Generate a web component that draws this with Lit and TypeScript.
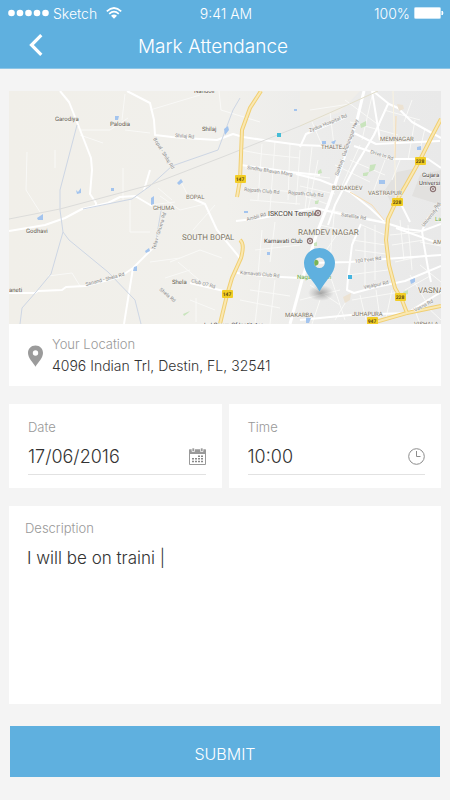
import { LitElement, html, css, svg } from "lit";
import { customElement, state } from "lit/decorators.js";

type Label = [text: string, x: number, y: number, size: number, kind: string, angle?: number];

const labels: Label[] = [
  ["Garodiya", 55, 121, 6, "town"],
  ["Palodia", 110, 126, 6, "town"],
  ["Nandoli", 194, 93, 6, "town"],
  ["Shilaj", 202, 131, 6, "town"],
  ["Godhavi", 26, 233, 6, "town"],
  ["aneti", 9, 292, 6, "town"],
  ["Shela", 172, 284, 6, "town"],
  ["BOPAL", 186, 199, 6, "area"],
  ["GHUMA", 153, 210, 6, "area"],
  ["THALTEJ", 321, 149, 6, "area"],
  ["MEMNAGAR", 380, 141, 6, "area"],
  ["BODAKDEV", 332, 190, 6, "area"],
  ["VASTRAPUR", 368, 195, 6, "area"],
  ["AM", 433, 244, 6, "area"],
  ["MAKARBA", 285, 317, 6, "area"],
  ["JUHAPURA", 352, 316, 6, "area"],
  ["VISHALA", 414, 326, 6, "area"],
  ["SOUTH BOPAL", 182, 240, 8, "area"],
  ["RAMDEV NAGAR", 298, 235, 8, "area"],
  ["VASNA", 418, 293, 8, "area"],
  ["ISKCON Temple", 268, 216, 7, "place"],
  ["Karnavati Club", 264, 243, 6, "place"],
  ["Gujara", 422, 177, 6, "place"],
  ["Universi", 419, 185, 6, "place"],
  ["L J Group Of Institutes", 204, 327, 6, "place"],
  ["Nagar Udyan", 297, 279, 6, "park"],
  ["La", 435, 221, 6, "park"],
  ["Shilaj Rd", 175, 137, 5, "street", 4],
  ["Bopal - Shilaj Rd", 153, 139, 5, "street", 58],
  ["Sindhu Bhavan Marg", 247, 169, 5, "street", 9],
  ["Rajpath Club Rd", 244, 191, 5, "street", 5],
  ["Rajpath Club Rd", 288, 194, 5, "street", 5],
  ["Zydus Hospital Rd", 310, 132, 5, "street", -22],
  ["Sarkhej - Gandhinagar Hwy", 338, 176, 5, "street", -70],
  ["Drive In Rd", 370, 153, 5, "street", 18],
  ["Ambli Rd", 247, 221, 5, "street", -15],
  ["Satellite Rd", 341, 216, 5, "street", 9],
  ["100 Feet Rd", 355, 263, 5, "street", -7],
  ["Vejalpur Rd", 364, 289, 5, "street", -12],
  ["Vasna Rd", 415, 312, 5, "street", -28],
  ["Karnavati Club Rd", 240, 274, 5, "street", 5],
  ["Club O7 Rd", 191, 282, 5, "street", 15],
  ["Shela Rd", 159, 290, 5, "street", 40],
  ["Telav - Ghuma Rd", 155, 250, 5, "street", -73],
  ["Sanand - Shela Rd", 86, 286, 5, "street", -15],
  ["University Rd", 424, 227, 5, "street", -52],
  ["Rd", 436, 209, 5, "street", -45],
];

const shields: [string, number, number][] = [
  ["147", 240, 179],
  ["147", 227, 294],
  ["228", 420, 161],
  ["228", 397, 202],
  ["228", 400, 297],
  ["947", 372, 321],
];

const mapArt = svg`
  <defs>
    <linearGradient id="land" x1="0" x2="1" y1="0" y2="0">
      <stop offset="0" stop-color="#f1efe9" />
      <stop offset="0.5" stop-color="#f1f0ec" />
      <stop offset="0.72" stop-color="#ececeb" />
      <stop offset="1" stop-color="#e9e9e9" />
    </linearGradient>
    <radialGradient id="shade">
      <stop offset="0" stop-color="#555" stop-opacity="0.5" />
      <stop offset="1" stop-color="#777" stop-opacity="0" />
    </radialGradient>
  </defs>
  <rect x="9" y="91" width="432" height="233" fill="url(#land)" />
  <path d="M397 172L417 168L402 195L392 205L385 190Z M420 175L441 170V205L412 196Z" fill="#e2e1df" />
  <path d="M300 91H360L340 112L300 126Z" fill="#f0eee9" />
  <g fill="none" stroke="#f9f9f7" stroke-width="1">
    <path d="M27 152L26 190L40 212M80 130H110L128 118M80 135L103 143M125 94L122 120M125 130L150 133M123 168V200M55 150V168M150 110L200 95M219 91L221 110L260 122M193 230L215 205M160 196L180 210L205 204M158 188L172 200M180 180L190 200M150 205L175 202M170 262L200 250L222 258M165 278L190 270M190 300L215 310M178 262L205 285M48 276L72 273L80 286M130 200V232H150M150 262L180 258M196 298V322M240 150L262 154L300 158M262 144L258 200M275 142L270 210M290 144L288 200M300 150L296 205M312 147L305 210M245 168L330 178M243 188L325 194M250 200L300 204M310 110L350 104M312 122L322 145M330 112L334 146M345 100L380 126M350 122L398 135M372 96L362 140M384 110L420 120M412 100L404 122M350 160L385 175M335 165L370 182M360 145L340 190M378 126L360 160M385 160L372 195M400 160L392 180M415 120L408 160M425 128L420 150M300 186L335 194M305 196L330 205M318 160L308 210M330 210L385 222M320 225L350 232M335 205L330 260M362 225L385 235M352 240L386 245M355 250L386 254M365 228V285M375 225V280M348 275L388 270M352 300L400 292M360 295L366 320M376 290L380 318M392 290L386 318M310 285L340 305M320 300L312 324M330 275L345 320M300 300L340 290M335 320L350 295M390 235L420 232M392 245L424 240M395 262L427 255M408 225L412 270M400 220L404 260M420 242L441 246M420 265L441 282M410 275L425 300M405 290L430 276M425 305L441 320M415 310L420 324M340 230L325 252M255 250L300 245M262 230L258 275M275 222L270 262M250 290L290 296M260 280L255 324M275 280L270 324M240 300L280 308" />
  </g>
  <g fill="none" stroke="#fff" stroke-linejoin="round" stroke-width="2">
    <path d="M60 91L69 102L77 122L91 158L92 170L90 194L96 203V206" />
    <path d="M9 231L45 225L65 218L82 209L108 203L120 197L135 196L152 206" />
    <path d="M127 91L150 103L154 120L155 135L172 137L200 139L217 140L233 134L243 137L270 141L300 145L325 146" />
    <path d="M9 293L35 293L38 291L62 290L66 287L85 286L120 277L133 268L155 246M133 268L124 324" />
    <path d="M187 196L205 204L217 230L240 258M150 170L144 190" />
    <path d="M364 91L357 120L344 158L328 205L318 230L302 280L290 324" stroke-width="3" />
    <path d="M373 91L389 104L398 108L412 122L441 138M388 104L374 135L354 168L335 205L328 225" />
    <path d="M300 147L306 134L346 117M352 132L376 144L440 141M354 146L372 152L390 159L428 159L441 168M296 174L320 180L350 192L370 208L384 221" />
    <path d="M236 221L262 218L290 212L315 208L345 215L386 223L405 229L422 231L441 224" />
    <path d="M237 273L263 276L300 278M310 263L350 262L385 259L441 255" />
    <path d="M361 224L352 245L348 278L347 290L354 293L376 287L405 281L441 266M422 231L424 245L428 268L431 282M422 231L428 218L441 205" />
    <path d="M407 313L441 292M190 283L224 291M241 165L290 172L320 175M400 202L410 222M372 91L380 140M396 228L441 244M300 320L350 315L407 313" />
  </g>
  <g fill="none" stroke="#cdd6e4" stroke-width="1">
    <path d="M77 125L60 190L60 210L63 232L51 274L36 292L22 308L20 324" />
    <path d="M63 232L69 240L108 272L135 300L141 324M83 209L132 199L150 186L172 166L218 150L233 110L240 98" />
    <path d="M155 246L162 205" />
    <path d="M9 219L60 209L150 185L225 156L300 126" stroke="#dcdcda" />
    <path d="M300 126L345 106L378 91" stroke="#e2decb" />
  </g>
  <g fill="none" stroke="#f0cf73" stroke-width="4">
    <path d="M261 91L250 108L242 130L241 155L240 180L237 197M240 240Q245 244 241 258L232 278L227 295L220 324" />
    <path d="M441 119L431 138L420 160L406 185L396 202L388 219L386 240L389 265L395 288L402 300L407 313L372 323M407 313L441 306" />
    <path d="M396 205L393 91" stroke="#faf3e0" stroke-width="1" />
    <path d="M396 116L395 158M350 192L372 205L384 220" stroke="#f6ddb5" stroke-width="1" />
  </g>
  <g fill="none" stroke="#fae8b2" stroke-width="2">
    <path d="M261 91L250 108L242 130L241 155L240 180L237 197M240 240Q245 244 241 258L232 278L227 295L220 324" />
    <path d="M441 119L431 138L420 160L406 185L396 202L388 219L386 240L389 265L395 288L402 300L407 313L372 323M407 313L441 306" />
  </g>
  <path d="M115 116H119L118 120H115ZM76 190L78 192L81 188V193L77 194ZM111 188H114V191H111ZM37 218L43 214V220H38ZM224 129L228 126L229 130L225 135ZM177 183L181 179L183 182L179 185ZM151 198L154 196V204L151 205ZM134 267L137 266V271H133ZM145 251L149 248L150 251L146 253ZM322 141H326V144H322ZM331 142L336 140L334 145ZM417 147L421 146V150H417ZM379 180H385V184H379ZM244 211H248V213H244ZM410 280L415 278V282L411 284ZM306 317L311 318L309 323H306ZM267 252H270V255H267ZM294 109H297V111H294Z" fill="#a3c4ee" />
  <path d="M370 165L376 164L374 170L369 172ZM363 173L369 172L367 176H363ZM360 124L366 121V126L361 128ZM318 171L321 169L322 173L318 174ZM314 243L317 242V246H314ZM315 201L319 200L318 204H315ZM403 292L408 290V294L404 295ZM183 314L190 311L188 313L184 316Z" fill="#c9e4bd" />
  <path d="M397 104L403 105L404 109L399 111ZM343 297L351 293L350 300L345 303Z" fill="#ece2d2" />
  <rect x="277" y="133" width="4" height="4" fill="#45bcd6" />
  <rect x="348" y="275" width="4" height="4" fill="#45b5e0" />
  <rect x="391" y="203" width="11" height="3" rx="1" fill="#eec83a" />
`;

@customElement("app-root")
export class AppRoot extends LitElement {
  @state() private date = "17/06/2016";
  @state() private time = "10:00";
  @state() private description = "I will be on traini |";

  static styles = css`
    :host {
      display: block;
      min-height: 100vh;
      box-sizing: border-box;
      background: #f4f4f4;
      color: #333;
      font-family: Inter, "Liberation Sans", sans-serif;
      font-weight: 300;
    }
    * {
      box-sizing: border-box;
    }
    .top {
      background: #5fb0df;
      color: #fff;
      border-bottom: 1px solid #8fc6e6;
    }
    .status {
      display: grid;
      grid-template-columns: 1fr auto 1fr;
      align-items: center;
      height: 26px;
      padding: 0 6px 0 8px;
      font-size: 14px;
    }
    .carrier,
    .power {
      display: flex;
      align-items: center;
      gap: 4px;
    }
    .power {
      justify-content: flex-end;
    }
    .wifi {
      margin-left: 5px;
    }
    svg {
      display: block;
      flex: none;
    }
    .bar {
      display: grid;
      grid-template-columns: 48px 1fr 72px;
      align-items: center;
      height: 42px;
      padding: 0 12px;
    }
    .back {
      display: flex;
      justify-content: center;
      align-items: center;
      height: 36px;
      padding: 0 0 4px;
      border: 0;
      background: none;
      color: inherit;
    }
    h1 {
      margin: 0;
      text-align: center;
      font-size: 19px;
      line-height: 24px;
      font-weight: 300;
    }
    main {
      display: flex;
      flex-direction: column;
      gap: 18px;
      padding: 22px 9px;
    }
    .card {
      background: #fff;
    }
    .map {
      width: 100%;
      height: auto;
    }
    .map text {
      font-family: Roboto, "Liberation Sans", sans-serif;
      font-weight: 400;
      text-rendering: geometricPrecision;
      paint-order: stroke;
      stroke: #f6f5f2;
      stroke-width: 1px;
    }
    .map .town {
      fill: #5f574c;
    }
    .map .area {
      fill: #7d7566;
    }
    .map .place {
      fill: #44403c;
    }
    .map .park {
      fill: #65a844;
    }
    .map .street {
      fill: #888;
    }
    .map .shield {
      fill: #5b4a10;
      stroke: none;
      font-weight: 700;
      text-anchor: middle;
    }
    .place-row {
      display: flex;
      align-items: center;
      gap: 8px;
      height: 62px;
      padding: 2px 18px 0;
    }
    .label {
      display: block;
      color: #999;
      font-size: 13px;
      line-height: 20px;
    }
    .address {
      font-size: 14px;
      line-height: 24px;
    }
    .pair {
      display: grid;
      grid-template-columns: 1fr 1fr;
      gap: 7px;
    }
    .field {
      padding: 13px 16px 13px 19px;
    }
    .entry {
      display: flex;
      align-items: center;
      height: 38px;
      padding-top: 2px;
      border-bottom: 1px solid #e2e2e2;
    }
    input,
    textarea {
      display: block;
      width: 100%;
      min-width: 0;
      margin: 0;
      padding: 0;
      border: 0;
      outline: 0;
      background: none;
      color: inherit;
      font: inherit;
      font-size: 18px;
      line-height: 24px;
    }
    textarea {
      height: 140px;
      padding: 0 2px;
      font-size: 17px;
      resize: none;
    }
    .note {
      height: 198px;
      padding: 12px 16px;
    }
    .note .label {
      margin-bottom: 8px;
    }
    .submit {
      height: 51px;
      margin: 4px 1px 0;
      padding: 4px 0 0;
      border: 0;
      background: #5fb0df;
      color: #fff;
      font: inherit;
      font-size: 16px;
    }
  `;

  private renderMap() {
    return html`
      <svg class="map" viewBox="9 91 432 233" role="img" aria-label="Map of the current location">
        ${mapArt}
        ${labels.map(
          ([text, x, y, size, kind, angle = 0]) => svg`
            <text class=${kind} x=${x} y=${y} font-size=${size} transform="rotate(${angle} ${x} ${y})">${text}</text>`
        )}
        ${shields.map(
          ([text, x, y]) => svg`
            <rect x=${x - 5} y=${y - 4} width="11" height="8" rx="1" fill="#f2cd25" />
            <text class="shield" x=${x} y=${y + 2} font-size="5">${text}</text>`
        )}
        ${[[318, 213], [310, 241], [433, 189]].map(
          ([x, y]) => svg`
            <circle cx=${x} cy=${y} r="2.5" fill="#fff" stroke="#8c7474" stroke-width="1.3" />
            <circle cx=${x} cy=${y} r="1" fill="#8c7474" />`
        )}
        <ellipse cx="321" cy="293" rx="13" ry="8" fill="url(#shade)" />
        <path
          fill="#5fb0df"
          fill-rule="evenodd"
          d="M319.500 248C311 248 304 254.800 304 263C304 274 313.500 280 319.500 291.500C325.500 280 335 274 335 263C335 254.800 328 248 319.500 248ZM319.500 257.500A5.300 5.300 0 1 1 319.500 268.100A5.300 5.300 0 1 1 319.500 257.500Z"
        />
        <path d="M315.500 259.500A5 5 0 0 0 315.500 266L318 264.500A3 3 0 0 0 317 260Z" fill="#79b356" />
      </svg>
    `;
  }

  render() {
    return html`
      <header class="top">
        <div class="status">
          <div class="carrier">
            <svg width="41" height="8" viewBox="0 0 41 8" fill="#fff" aria-hidden="true">
              ${[3.5, 12, 20.5, 29, 37.500].map((x) => svg`<circle cx=${x} cy="4" r="3.300" />`)}
            </svg>
            <span>Sketch</span>
            <svg class="wifi" width="16" height="12" viewBox="0 0 16 12" fill="none" stroke="#fff" stroke-width="1.700" aria-hidden="true">
              <path d="M0.800 4.300Q8 -2.300 15.200 4.300M3.200 6.900Q8 2.500 12.800 6.900" />
              <path d="M5 8.700Q8 6.200 11 8.700L8 11.700Z" fill="#fff" stroke="none" />
            </svg>
          </div>
          <span>9:41 AM</span>
          <div class="power">
            <span>100%</span>
            <svg width="30" height="12" viewBox="0 0 30 12" aria-hidden="true">
              <rect x="0.500" y="0.500" width="26" height="11" rx="1" fill="#fff" stroke="#c9e5f5" />
              <path d="M28 4Q30 6 28 8Z" fill="#fff" stroke="#fff" />
            </svg>
          </div>
        </div>
        <div class="bar">
          <button class="back" type="button" aria-label="Back">
            <svg width="14" height="22" viewBox="0 0 14 22" fill="none" stroke="#fff" stroke-width="3.200" aria-hidden="true">
              <path d="M12.300 1.200L2.500 11L12.300 20.800" />
            </svg>
          </button>
          <h1>Mark Attendance</h1>
        </div>
      </header>
      <main>
        <section class="card">
          ${this.renderMap()}
          <div class="place-row">
            <svg width="17" height="22" viewBox="0 0 17 22" aria-hidden="true">
              <path
                fill="#9b9b9b"
                fill-rule="evenodd"
                d="M8.500 0.500C4 0.500 1 3.700 1 8C1 13 6 17.500 8.500 21.700C11 17.500 16 13 16 8C16 3.700 13 0.500 8.500 0.500ZM8.500 5.300A2.700 2.700 0 1 1 8.500 10.700A2.700 2.700 0 1 1 8.500 5.300Z"
              />
            </svg>
            <div>
              <span class="label">Your Location</span>
              <div class="address">4096 Indian Trl, Destin, FL, 32541</div>
            </div>
          </div>
        </section>
        <div class="pair">
          <div class="card field">
            <label class="label" for="date">Date</label>
            <div class="entry">
              <input id="date" .value=${this.date} @input=${(e: Event) => (this.date = (e.target as HTMLInputElement).value)} />
              <svg width="17" height="17" viewBox="0 0 17 17" aria-hidden="true">
                <path d="M0.500 2H16.500V16.500H0.500Z" fill="none" stroke="#999" />
                <path d="M0 1.500H17V6H0Z" fill="#999" />
                <path d="M3 0H5.500V3.500H3ZM11.500 0H14V3.500H11.500Z" fill="#999" stroke="#fff" stroke-width="0.700" />
                <path
                  d="M9 7.500H11V9H9ZM12 7.500H14V9H12ZM3 10H5V11.500H3ZM6 10H8V11.500H6ZM9 10H11V11.500H9ZM12 10H14V11.500H12ZM3 12.700H5V14.200H3ZM6 12.700H8V14.200H6ZM9 12.700H11V14.200H9ZM12 12.700H14V14.200H12Z"
                  fill="#888"
                />
              </svg>
            </div>
          </div>
          <div class="card field">
            <label class="label" for="time">Time</label>
            <div class="entry">
              <input id="time" .value=${this.time} @input=${(e: Event) => (this.time = (e.target as HTMLInputElement).value)} />
              <svg width="17" height="17" viewBox="0 0 17 17" fill="none" stroke="#8c8c8c" aria-hidden="true">
                <circle cx="8.500" cy="8.500" r="7.800" />
                <path d="M8.500 3V8.500H12.500" />
              </svg>
            </div>
          </div>
        </div>
        <section class="card note">
          <label class="label" for="description">Description</label>
          <textarea
            id="description"
            .value=${this.description}
            @input=${(e: Event) => (this.description = (e.target as HTMLTextAreaElement).value)}
          ></textarea>
        </section>
        <button class="submit" type="button">SUBMIT</button>
      </main>
    `;
  }
}
